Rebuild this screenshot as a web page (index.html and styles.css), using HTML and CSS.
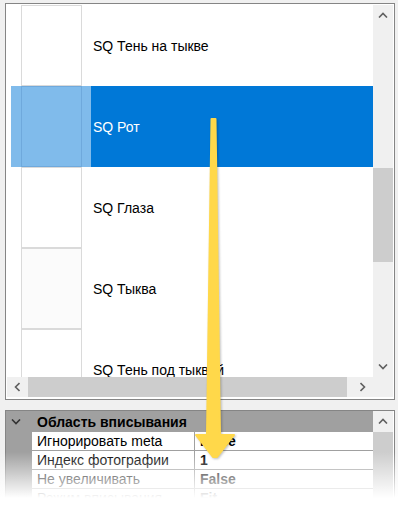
FILE: index.html
```html
<!DOCTYPE html>
<html lang="ru">
<head>
    <meta charset="UTF-8">
    <title>Слои</title>
    <link rel="stylesheet" href="styles.css">
</head>
<body>
    <div class="list">
        <div class="list-view">
            <div class="row">
                <div class="thumb-cell"><div class="thumb"></div></div>
                <div class="name">SQ Тень на тыкве</div>
            </div>
            <div class="row selected">
                <div class="thumb-cell"><div class="thumb"></div></div>
                <div class="name">SQ Рот</div>
            </div>
            <div class="row">
                <div class="thumb-cell"><div class="thumb"></div></div>
                <div class="name">SQ Глаза</div>
            </div>
            <div class="row">
                <div class="thumb-cell"><div class="thumb grey"></div></div>
                <div class="name">SQ Тыква</div>
            </div>
            <div class="row">
                <div class="thumb-cell"><div class="thumb"></div></div>
                <div class="name">SQ Тень под тыквой</div>
            </div>
        </div>
        <div class="vscroll">
            <div class="sbtn"><svg width="10" height="6" viewBox="0 0 10 6"><path d="M1 5.5 L5 1.5 L9 5.5" /></svg></div>
            <div class="vtrack"><div class="vthumb"></div></div>
            <div class="sbtn"><svg width="10" height="6" viewBox="0 0 10 6"><path d="M1 0.5 L5 4.5 L9 0.5" /></svg></div>
        </div>
        <div class="hscroll">
            <div class="sbtn"><svg width="6" height="10" viewBox="0 0 6 10"><path d="M5.5 1 L1.5 5 L5.5 9" /></svg></div>
            <div class="hthumb"></div>
            <div class="sbtn"><svg width="6" height="10" viewBox="0 0 6 10"><path d="M0.5 1 L4.5 5 L0.5 9" /></svg></div>
        </div>
        <div class="corner"></div>
    </div>

    <div class="props">
        <div class="props-main">
            <div class="cat">
                <span class="cat-chev"><svg width="10" height="6" viewBox="0 0 10 6"><path d="M1 0.5 L5 4.5 L9 0.5" /></svg></span>
                Область вписывания
            </div>
            <div class="prop">
                <div class="gutter"></div>
                <div class="pname">Игнорировать meta</div>
                <div class="pval">False</div>
            </div>
            <div class="prop">
                <div class="gutter"></div>
                <div class="pname">Индекс фотографии</div>
                <div class="pval">1</div>
            </div>
            <div class="prop">
                <div class="gutter"></div>
                <div class="pname">Не увеличивать</div>
                <div class="pval">False</div>
            </div>
            <div class="prop">
                <div class="gutter"></div>
                <div class="pname">Режим вписывания</div>
                <div class="pval">Fit</div>
            </div>
        </div>
        <div class="vscroll">
            <div class="sbtn"><svg width="10" height="6" viewBox="0 0 10 6"><path d="M1 5.5 L5 1.5 L9 5.5" /></svg></div>
            <div class="vtrack"><div class="pthumb"></div></div>
        </div>
    </div>

    <div class="fade"></div>

    <svg class="arrow" width="60" height="360" viewBox="0 0 60 360">
        <path d="M27.5 2 L31.5 2 L36 318 L50 318 L33 340 L29 340 L12 318 L23 318 Z" />
    </svg>
</body>
</html>
```

FILE: styles.css
```css
body {
    margin: 0;
    background-color: #f0f0f0;
    font-family: 'Liberation Sans', Arial, sans-serif;
    font-size: 14px;
    color: #000;
    height: 525px;
    overflow: hidden;
    position: relative;
}
.list {
    margin: 3px 0 0 5px;
    width: 390px;
    height: 397px;
    box-sizing: border-box;
    border: 1px solid #858585;
    padding: 1px;
    background-color: #fff;
    display: grid;
    grid-template-columns: 366px 20px;
    grid-template-rows: 372px 20px;
}
.list-view {
    overflow: hidden;
    padding-left: 4px;
}
.row {
    display: flex;
    height: 81px;
}
.thumb-cell {
    width: 80px;
    padding-left: 10px;
    box-sizing: border-box;
}
.thumb {
    width: 61px;
    height: 81px;
    box-sizing: border-box;
    border: 1px solid #dadada;
    background-color: #fff;
}
.thumb.grey {
    background-color: #fbfbfb;
}
.name {
    flex: 1;
    display: flex;
    align-items: center;
    padding-left: 2px;
}
.row.selected .thumb-cell {
    background-color: #80bbeb;
}
.row.selected .thumb {
    background-color: #80bbeb;
    border-color: #6fa9dc;
}
.row.selected .name {
    background-color: #0078d7;
    color: #fff;
}
.vscroll {
    background-color: #f0f0f0;
    display: flex;
    flex-direction: column;
}
.sbtn {
    width: 20px;
    height: 20px;
    display: flex;
    align-items: center;
    justify-content: center;
    flex: none;
}
.sbtn svg path,
.cat-chev svg path {
    fill: none;
    stroke: #606060;
    stroke-width: 1.6;
}
.vtrack {
    flex: 1;
    position: relative;
}
.vthumb {
    margin-top: 143px;
    height: 94px;
    background-color: #cdcdcd;
}
.hscroll {
    background-color: #f0f0f0;
    display: flex;
}
.hthumb {
    width: 319px;
    margin-left: 1px;
    background-color: #cdcdcd;
}
.hscroll .sbtn:last-child {
    margin-left: auto;
}
.corner {
    background-color: #f0f0f0;
}
.props {
    margin: 10px 0 0 5px;
    width: 390px;
    height: 120px;
    box-sizing: border-box;
    border: 1px solid #858585;
    border-bottom: none;
    padding-right: 1px;
    background-color: #fff;
    display: flex;
}
.props-main {
    width: 367px;
}
.cat {
    height: 21px;
    background-color: #a0a0a0;
    font-weight: bold;
    display: flex;
    align-items: center;
    padding-left: 5px;
}
.cat-chev {
    width: 26px;
    display: flex;
    align-items: center;
}
.cat-chev svg path {
    stroke: #333;
}
.prop {
    display: flex;
    height: 19px;
}
.gutter {
    width: 26px;
    background-color: #a0a0a0;
}
.pname {
    width: 157px;
    padding-left: 5px;
    border-right: 1px solid #a0a0a0;
    border-bottom: 1px solid #a0a0a0;
    display: flex;
    align-items: center;
}
.pval {
    flex: 1;
    padding-left: 5px;
    font-weight: bold;
    border-bottom: 1px solid #a0a0a0;
    display: flex;
    align-items: center;
}
.props .vscroll {
    width: 20px;
}
.pthumb {
    margin-top: 1px;
    height: 90px;
    background-color: #cdcdcd;
}
.fade {
    position: absolute;
    left: 0;
    top: 452px;
    width: 398px;
    height: 73px;
    background: linear-gradient(rgba(255, 255, 255, 0) 0, #fff 46px);
}
.arrow {
    position: absolute;
    left: 184px;
    top: 117px;
    filter: drop-shadow(1px 1px 1px rgba(0, 0, 0, 0.25));
}
.arrow path {
    fill: #ffd84a;
    stroke: #ffd84a;
    stroke-width: 2;
    stroke-linejoin: round;
}
```
